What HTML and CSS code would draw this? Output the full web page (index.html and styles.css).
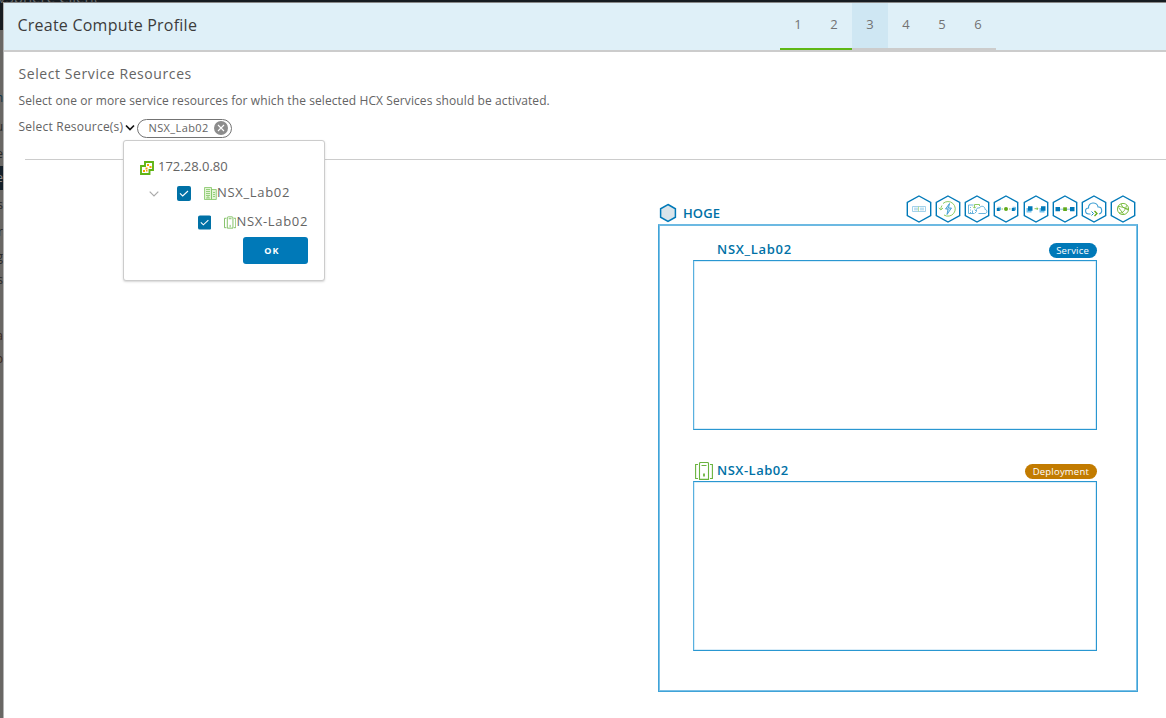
FILE: index.html
```
<!DOCTYPE html>
<html lang="en">
<head>
<meta charset="utf-8">
<title>Create Compute Profile</title>
<link rel="stylesheet" href="styles.css">
</head>
<body>
<div class="behind">
  <span class="client">vSphere Client</span>
  <span class="frag blue" style="top:90px">m</span>
  <span class="frag" style="top:119px">u</span>
  <span class="frag" style="top:146px">e</span>
  <span class="frag on" style="top:166px">e</span>
  <span class="frag" style="top:197px">s</span>
  <span class="frag" style="top:224px">r</span>
  <span class="frag" style="top:249px">g</span>
  <span class="frag" style="top:272px">s</span>
  <span class="frag brown" style="top:328px">a</span>
  <span class="frag brown" style="top:351px">p</span>
</div>
<main class="wizard">
  <header class="header">
    <h1 class="title">Create Compute Profile</h1>
    <ol class="steps">
      <li class="step done">1</li><li class="step done">2</li><li class="step current">3</li><li class="step">4</li><li class="step">5</li><li class="step">6</li>
    </ol>
  </header>
  <section class="intro">
    <h2 class="subtitle">Select Service Resources</h2>
    <p class="desc">Select one or more service resources for which the selected HCX Services should be activated.</p>
    <div class="picker">
      <span class="picker-label">Select Resource(s)</span>
      <svg class="caret" width="10" height="8" viewBox="0 0 10 8"><path d="M1 1.500l4 4 4-4" fill="none" stroke="#111" stroke-width="1.700"/></svg>
      <span class="chip"><span class="chip-text">NSX_Lab02</span><svg width="14" height="14" viewBox="0 0 14 14"><circle cx="7" cy="7" r="7" fill="#8c8c8c"/><path d="M4 4l6 6M10 4l-6 6" stroke="#fff" stroke-width="1.1"/></svg></span>
      <div class="menu">
        <div class="row root">
          <svg width="14" height="14" viewBox="0 0 14 14"><path d="M5 1h8v8H9.500v4H1V5h4z" fill="#fff" stroke="#60b515" stroke-width="1.900"/><path d="M7 3h2v2H7zM9.500 5h2v2h-2zM5.500 6.500h2v2h-2zM3 9h2v2H3zM6 9h1.500v1.500H6z" fill="#f5a500"/></svg>
          <span class="name">172.28.0.80</span>
        </div>
        <div class="row center">
          <svg class="twist" width="10" height="6" viewBox="0 0 10 6"><path d="M.7.7L5 5 9.300.7" fill="none" stroke="#aaa" stroke-width="1.200"/></svg>
          <svg class="check" width="14" height="15" viewBox="0 0 14 15"><rect width="14" height="15" rx="2" fill="#0071a6"/><path d="M3 7.300l2.700 2.600L11 5" fill="none" stroke="#fff" stroke-width="1.100"/></svg>
          <svg class="node" width="13" height="13" viewBox="0 0 13 13" fill="#e3f4d6" stroke="#83c564" stroke-width=".8"><path d="M.5 12.500V.5h7v12zM7.500 12.500V2.500h4.800v10z"/><path d="M2 2.500h4M2 4.500h4M2 6.500h4M2 8.500h4M3 12v-2h2v2M9 5.500h2M9 7.500h2M9 9.500h2"/></svg>
          <span class="name">NSX_Lab02</span>
        </div>
        <div class="row cluster">
          <svg class="check" width="14" height="15" viewBox="0 0 14 15"><rect width="14" height="15" rx="2" fill="#0071a6"/><path d="M3 7.300l2.700 2.600L11 5" fill="none" stroke="#fff" stroke-width="1.100"/></svg>
          <svg class="node" width="13" height="13" viewBox="0 0 13 13" fill="none" stroke="#70b850" stroke-width=".9"><path d="M2.500 2H.5v10h2M10.500 2h2v10h-2M3.500 12.500V1.500q0-1 1-1h4q1 0 1 1v11zM5 2.500h3M6.500 9v2.500"/></svg>
          <span class="name">NSX-Lab02</span>
        </div>
        <button class="ok">OK</button>
      </div>
    </div>
  </section>
  <hr class="rule">
  <section class="site">
    <div class="site-head">
      <svg width="18" height="20" viewBox="0 0 18 20"><path d="M9 1.500l7.400 4.250v8.500L9 18.500l-7.400-4.250v-8.500z" fill="#d9e4ea" stroke="#0079b8" stroke-width="1.500"/></svg>
      <span class="site-name">HOGE</span>
      <div class="services">
        <svg class="hex" viewBox="0 0 26 28"><path class="edge" d="M13 1l11.700 6.500v13L13 27 1.300 20.500v-13z"/><g fill="none" stroke="#8cc6e6" stroke-width=".8"><path d="M6.500 11.500h13v5h-13zM8 13.200h4M8 14.800h4M14 13.200h4M14 14.800h4"/><path d="M12.500 11.500v5" stroke="#a5d787"/></g></svg>
        <svg class="hex" viewBox="0 0 26 28"><path class="edge" d="M13 1l11.700 6.500v13L13 27 1.300 20.500v-13z"/><path d="M8 8.500A7.300 7.300 0 1 1 9 20M5.800 14.500A7 7 0 0 1 7 10.500M3.800 12.800l2 2.200 2.200-2" fill="none" stroke="#8ccb64"/><path d="M14.500 8.500L10.500 14h2.500l-1 5.500 4.500-6.500h-3z" fill="#bce0f4" stroke="#2a92cb" stroke-width=".8"/></svg>
        <svg class="hex" viewBox="0 0 26 28"><path class="edge" d="M13 1l11.700 6.500v13L13 27 1.300 20.500v-13z"/><path d="M9.500 10h-5v8.500h5.500M6.500 12v1M6.500 14.500v1M6.500 17v1M8.500 15.500v3M10.500 14.500l2 2-2 2M14.500 18.500H21c2.500 0 2.500-4 0-4 .2-4-5-4-5.500-1.500-2.500-.6-3.500 1-3 3" fill="none" stroke="#5aabd8" stroke-width=".9"/><path d="M10.500 13v-3.500h5v1.500M9 11.700l1.500 1.500L12 11.700" fill="none" stroke="#8ccb64"/></svg>
        <svg class="hex" viewBox="0 0 26 28"><path class="edge" d="M13 1l11.700 6.500v13L13 27 1.300 20.500v-13z"/><path d="M8.500 14h1.500M16 14h1.500" stroke="#76bc43" stroke-width=".9"/><path d="M3.800 13h3v3h-3zM18.800 13h3v3h-3z" fill="#0079b8"/><path d="M4.500 12.300h3v3M19.500 12.300h3v3" fill="none" stroke="#68b7e0"/><circle cx="13" cy="14" r="2" fill="#60a917"/></svg>
        <svg class="hex" viewBox="0 0 26 28"><path class="edge" d="M13 1l11.700 6.500v13L13 27 1.300 20.500v-13z"/><path d="M3.500 13h5v4.500h-5zM16.500 13h5v4.500h-5z" fill="#77c2ec"/><path d="M5 11.300h4.500v4.500H5zM18 11.300h4.500v4.500H18z" fill="#0079b8"/><path d="M11.500 13.700h3.500M13.700 12.400l1.300 1.300-1.300 1.300" fill="none" stroke="#76bc43" stroke-width=".9"/></svg>
        <svg class="hex" viewBox="0 0 26 28"><path class="edge" d="M13 1l11.700 6.500v13L13 27 1.300 20.500v-13z"/><path d="M6 14.200h14" stroke="#8fc3da"/><path d="M3.500 12h4.500v4.200H3.500zM18 12h4.500v4.200H18z" fill="#0079b8"/><path d="M11.200 12.300h3.700v3.700h-3.700z" fill="#60a917"/></svg>
        <svg class="hex" viewBox="0 0 26 28"><path class="edge" d="M13 1l11.700 6.500v13L13 27 1.300 20.500v-13z"/><path d="M9.500 19H8c-4.500 0-4.500-6-.5-6C7 6.500 16.500 6.500 17 12c4.500-.5 5 6 1 7" fill="none" stroke="#3b9dd2" stroke-width="1.100"/><path d="M10.500 16.500l2 2-2 2" fill="none" stroke="#168ac8"/><path d="M13.500 16l2.500 2.500-2.500 2.500" fill="none" stroke="#60a917" stroke-width="1.300"/></svg>
        <svg class="hex" viewBox="0 0 26 28"><path class="edge" d="M13 1l11.700 6.500v13L13 27 1.300 20.500v-13z"/><g fill="none" stroke="#6fb52f" stroke-width=".9"><circle cx="13" cy="14" r="5.600"/><path d="M8 11.500c3 0 7 1 10 3.500M11 9c1 3 4 5 7 5M9 18c3 .5 6-1.500 7.500-7.500M8.500 12.500l5 6.500"/></g></svg>
      </div>
    </div>
    <div class="site-box">
      <div class="res-head">
        <span class="res-name">NSX_Lab02</span><span class="badge">Service</span>
      </div>
      <div class="res-box"></div>
      <div class="res-head second">
        <svg class="res-icon" width="18" height="18" viewBox="0 0 18 18" fill="none" stroke="#6ab33e" stroke-width="1.100"><path d="M3 2.500H.6v14H3M15 2.500h2.400v14H15M4.500 17.400V1.500q0-1 1-1h7q1 0 1 1v15.900zM6.500 3.500h5"/><path d="M9 11.500v3" stroke-width="1.800"/></svg>
        <span class="res-name cluster-name">NSX-Lab02</span><span class="badge deploy">Deployment</span>
      </div>
      <div class="res-box"></div>
    </div>
  </section>
</main>
</body>
</html>
```
FILE: styles.css
```
* { box-sizing: border-box; }
body {
  margin: 0;
  width: 1166px;
  height: 718px;
  overflow: hidden;
  position: relative;
  background: linear-gradient(#171c21 30px, #696764 30px);
  font-family: "Open Sans", "Noto Sans", sans-serif;
  font-size: 12px;
  color: #646464;
}
.behind { position: absolute; inset: 0; overflow: hidden; font-size: 12px; color: #292929; }
.client { position: absolute; left: -2px; top: -13px; font-size: 15px; line-height: 20px; color: #62676a; }
.frag { position: absolute; left: 0; width: 3px; height: 15px; line-height: 15px; overflow: hidden; direction: rtl; }
.frag.blue { color: #12364a; }
.frag.brown { color: #3c2820; }
.frag.on { height: 24px; line-height: 24px; background: #15202a; color: #8a8a8a; }
.wizard {
  position: relative;
  margin: 2px 0 0 3px;
  height: 716px;
  border-left: 1px solid #b4b4b4;
  border-top: 1px solid #888;
  background: #fff;
}
.header { display: flex; height: 49px; background: #dff0f8; border-bottom: 2px solid #ccc; }
.title { margin: 0; padding: 0 0 2px 13.500px; width: 776px; font-size: 16px; line-height: 44px; font-weight: 400; letter-spacing: .23px; color: #3c3c3c; }
.steps { display: flex; margin: 0; padding: 0; list-style: none; height: 47px; }
.step { width: 36px; text-align: center; line-height: 43px; font-size: 13px; color: #737373; border-bottom: 2px solid #ccc; }
.step.done { border-color: #5eb715; }
.step.current { background: #cfe7f3; }
.intro { padding: 12px 0 0 14.500px; height: 107px; }
.subtitle { margin: 0; font-size: 14px; line-height: 20px; font-weight: 400; letter-spacing: .58px; }
.desc { margin: 8px 0 0; line-height: 18px; letter-spacing: .095px; }
.picker { position: relative; display: flex; align-items: center; height: 20px; margin-top: 8px; }
.picker-label { width: 106px; white-space: nowrap; padding-bottom: 3px; letter-spacing: .22px; }
.caret { width: 10px; margin: 0 2px 1px 0; }
.chip { display: flex; align-items: center; justify-content: space-between; width: 95px; height: 19px; padding: 0 3px 0 11px; border: 1px solid #737373; border-radius: 10px; font-size: 11px; letter-spacing: .4px; }
.chip-text { line-height: 15px; padding-bottom: 2px; }
.menu {
  position: absolute;
  z-index: 2;
  left: 104.500px;
  top: 22px;
  width: 202px;
  height: 141px;
  padding: 14px 16px 0 16px;
  border: 1px solid #ccc;
  border-radius: 3px;
  background: #fff;
  box-shadow: 0 1px 2px rgba(115, 115, 115, .3);
  font-size: 13px;
}
.row { display: flex; align-items: center; height: 25px; }
.root { gap: 4px; }
.root svg { margin-top: 1px; }
.root .name { letter-spacing: 0; }
.center { padding-left: 9px; height: 27px; }
.center .check { margin-left: 18px; }
.cluster { padding-left: 58px; height: 30px; }
.node { margin-left: 13px; }
.name { line-height: 18px; padding-bottom: 3px; white-space: nowrap; letter-spacing: .68px; }
.ok { display: block; width: 65px; height: 27px; margin: 0 0 0 auto; border: 0; border-radius: 3px; background: #0079b8; color: #fff; font: 700 9px "Open Sans", sans-serif; letter-spacing: 1.200px; padding: 0 7px 1px 0; }
.rule { margin: 0 0 0 21px; border: 0; height: 1px; background: #ccc; }
.site { width: 479.500px; margin: 34px 0 0 654px; }
.site-head { display: flex; align-items: center; height: 30px; }
.site-head > svg { margin: 8px 0 0 1px; }
.site-name { margin: 8px auto 0 6px; color: #0071a6; font-size: 13px; font-weight: 600; line-height: 18px; letter-spacing: .1px; }
.services { display: flex; gap: 3.150px; margin: 0 1.500px 0 0; }
.hex { width: 26px; height: 28px; }
.edge { fill: #fff; stroke: #0079b8; stroke-width: 1.400; }
.site-box { height: 468px; padding: 15px 40px 0 34px; border: 1px solid #3fa3d8; border-top-color: #6cb9e2; border-top-width: 2px; box-shadow: inset 1px 0 #7cc1e6, inset -1px -1px #7cc1e6; }
.res-head { display: flex; align-items: flex-end; height: 19px; padding-left: 24px; }
.res-head.second { height: 51px; padding-left: 0; }
.res-icon { margin: 0 4px 1px 2px; }
.res-name { margin: 0 auto 1px 0; color: #0071a6; font-size: 13px; font-weight: 600; line-height: 20px; letter-spacing: .7px; }
.cluster-name { letter-spacing: .5px; }
.badge { height: 15px; padding: 0 7.500px; margin-bottom: 2px; border-radius: 8px; background: #0079b8; color: #fff; font-size: 9.500px; line-height: 15px; letter-spacing: .2px; }
.badge.deploy { background: #c27b00; }
.res-box { height: 170px; border: 1px solid #2997d1; border-left-color: #58b0df; box-shadow: inset 0 0 0 .5px #b5dcf1; }
```
